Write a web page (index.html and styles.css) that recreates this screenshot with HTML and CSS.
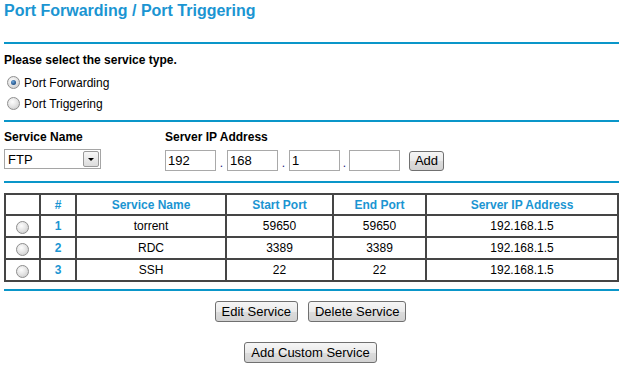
FILE: index.html
```html
<!DOCTYPE html>
<html lang="en">
<head>
  <meta charset="UTF-8" />
  <title>Port Forwarding / Port Triggering</title>
  <link rel="stylesheet" href="styles.css">
</head>
<body>
  <div class="page">
    <h1>Port Forwarding / Port Triggering</h1>
    <div class="rule"></div>

    <div class="section-title">Please select the service type.</div>
    <label class="radio-row"><input type="radio" name="mode" checked> Port Forwarding</label>
    <label class="radio-row"><input type="radio" name="mode"> Port Triggering</label>

    <div class="rule rule-2"></div>

    <div class="service-form">
      <div class="field name-field">
        <div class="field-label">Service Name</div>
        <div class="select-wrap">
          <select>
            <option>FTP</option>
            <option>HTTP</option>
            <option>SSH</option>
          </select>
          <span class="select-arrow"></span>
        </div>
      </div>
      <div class="field">
        <div class="field-label">Server IP Address</div>
        <div class="ip-row">
          <input class="ip" type="text" value="192">
          <span class="dot">.</span>
          <input class="ip" type="text" value="168">
          <span class="dot">.</span>
          <input class="ip" type="text" value="1">
          <span class="dot dot-last">.</span>
          <input class="ip" type="text" value="">
          <button class="btn add-btn">Add</button>
        </div>
      </div>
    </div>

    <div class="rule rule-3"></div>

    <table class="services">
      <colgroup>
        <col class="col-sel">
        <col class="col-num">
        <col class="col-name">
        <col class="col-start">
        <col class="col-end">
        <col>
      </colgroup>
      <tr>
        <th></th>
        <th>#</th>
        <th>Service Name</th>
        <th>Start Port</th>
        <th>End Port</th>
        <th>Server IP Address</th>
      </tr>
      <tr>
        <td><input type="radio" name="svc"></td>
        <td class="num">1</td>
        <td>torrent</td>
        <td>59650</td>
        <td>59650</td>
        <td>192.168.1.5</td>
      </tr>
      <tr>
        <td><input type="radio" name="svc"></td>
        <td class="num">2</td>
        <td>RDC</td>
        <td>3389</td>
        <td>3389</td>
        <td>192.168.1.5</td>
      </tr>
      <tr>
        <td><input type="radio" name="svc"></td>
        <td class="num">3</td>
        <td>SSH</td>
        <td>22</td>
        <td>22</td>
        <td>192.168.1.5</td>
      </tr>
    </table>

    <div class="rule rule-4"></div>

    <div class="actions">
      <button class="btn">Edit Service</button>
      <button class="btn">Delete Service</button>
    </div>
    <div class="actions actions-last">
      <button class="btn">Add Custom Service</button>
    </div>
  </div>
</body>
</html>
```

FILE: styles.css
```css
* {
  box-sizing: border-box;
}

body {
  margin: 0;
  background: #fff;
  font-family: 'Liberation Sans', Arial, sans-serif;
  font-size: 12px;
  color: #000;
}

.page {
  width: 628px;
  padding: 0 9px 0 4px;
}

h1 {
  margin: 0;
  height: 42px;
  padding-top: 1px;
  font-size: 16px;
  line-height: 19px;
  font-weight: bold;
  color: #1b95d2;
}

.rule {
  height: 2px;
  background: #0a96c9;
}

.rule-2 { margin-top: 6px; }
.rule-3 { margin-top: 10px; }
.rule-4 { margin-top: 7px; }

.section-title {
  margin-top: 9px;
  font-weight: bold;
  line-height: 15px;
}

.radio-row {
  display: flex;
  align-items: center;
  height: 21px;
  padding-left: 3px;
  gap: 4px;
}

.radio-row:first-of-type {
  margin-top: 4px;
}

input[type="radio"] {
  appearance: none;
  -webkit-appearance: none;
  width: 13px;
  height: 13px;
  margin: 0;
  border: 1px solid #8f8f8f;
  border-radius: 50%;
  background: radial-gradient(circle at 40% 35%, #fdfdfd 0%, #e6e6e6 45%, #c4c4c4 100%);
  position: relative;
}

input[type="radio"]:checked::after {
  content: "";
  position: absolute;
  left: 3px;
  top: 3px;
  width: 5px;
  height: 5px;
  border-radius: 50%;
  background: radial-gradient(circle at 40% 35%, #6fa8dc 0%, #1f4f86 70%, #173a66 100%);
}

.service-form {
  display: flex;
  margin-top: 8px;
}

.field-label {
  font-weight: bold;
  line-height: 15px;
}

.name-field {
  width: 161px;
}

.select-wrap {
  position: relative;
  width: 97px;
  height: 20px;
  margin-top: 4px;
}

.select-wrap select {
  appearance: none;
  -webkit-appearance: none;
  width: 100%;
  height: 100%;
  margin: 0;
  padding: 0 0 0 3px;
  border: 1px solid #a5a5a5;
  background: #fff;
  font-family: 'Liberation Sans', Arial, sans-serif;
  font-size: 13px;
  color: #000;
  border-radius: 0;
}

.select-arrow {
  position: absolute;
  right: 2px;
  top: 2px;
  width: 16px;
  height: 16px;
  border: 1px solid #9a9a9a;
  border-radius: 2px;
  background: linear-gradient(#f7f7f7, #dcdcdc);
  pointer-events: none;
}

.select-arrow::after {
  content: "";
  position: absolute;
  left: 4px;
  top: 6px;
  border-left: 3px solid transparent;
  border-right: 3px solid transparent;
  border-top: 3px solid #000;
}

.ip-row {
  display: flex;
  align-items: center;
  margin-top: 5px;
}

.ip {
  width: 51px;
  height: 21px;
  margin: 0;
  padding: 0 2px;
  border: 1px solid #a9a9a9;
  font-family: 'Liberation Sans', Arial, sans-serif;
  font-size: 13px;
  color: #000;
}

.dot {
  width: 11px;
  text-align: center;
  color: #1a1a7a;
  align-self: flex-end;
  line-height: 16px;
}

.dot-last {
  width: 9px;
}

.btn {
  height: 20px;
  margin: 0;
  padding: 0 6px;
  border: 1px solid #707070;
  border-radius: 3px;
  background: linear-gradient(#f6f6f6 0%, #eaeaea 50%, #dcdcdc 51%, #d2d2d2 100%);
  font-family: 'Liberation Sans', Arial, sans-serif;
  font-size: 13px;
  color: #000;
  line-height: 18px;
}

.add-btn {
  width: 35px;
  margin-left: 9px;
  padding: 0;
}

.services {
  margin-top: 10px;
  width: 615px;
  table-layout: fixed;
  border-collapse: collapse;
  border: 2px solid #454545;
}

.services th,
.services td {
  border: 2px solid #454545;
  height: 22px;
  padding: 0;
  text-align: center;
  line-height: 14px;
}

.services th {
  height: 21px;
  color: #1b95d2;
  font-weight: bold;
}

.services td input[type="radio"] {
  vertical-align: middle;
  margin-top: 2px;
}

.services .num {
  color: #1b95d2;
  font-weight: bold;
}

.col-sel { width: 35px; }
.col-num { width: 36px; }
.col-name { width: 150px; }
.col-start { width: 107px; }
.col-end { width: 93px; }

.actions {
  display: flex;
  justify-content: center;
  gap: 10px;
  margin-top: 10px;
  padding-right: 2px;
}

.actions .btn {
  height: 21px;
  padding: 0 6px;
}

.actions-last {
  margin-top: 20px;
}
```
